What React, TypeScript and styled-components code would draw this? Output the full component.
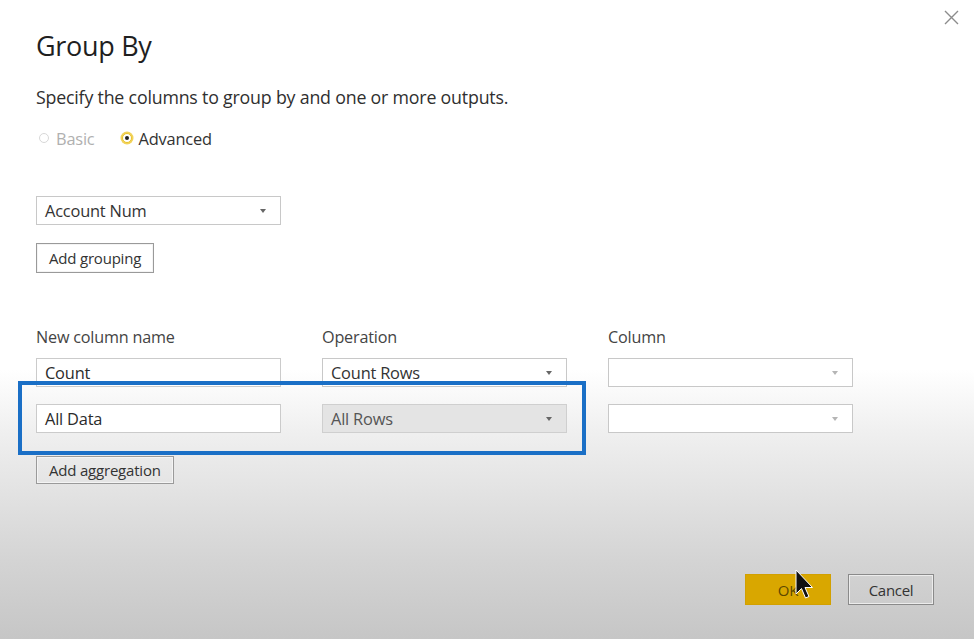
import React from "react";
import styled, { createGlobalStyle } from "styled-components";

const Global = createGlobalStyle`
  html, body { margin: 0; padding: 0; }
  body {
    width: 974px;
    height: 639px;
    overflow: hidden;
    font-family: "Open Sans", "Noto Sans", "Liberation Sans", sans-serif;
  }
`;

const Dialog = styled.div`
  position: relative;
  width: 974px;
  height: 639px;
  box-sizing: border-box;
  padding: 0 36px;
  background: linear-gradient(
    to bottom,
    #ffffff 0px,
    #ffffff 370px,
    #f0f0f0 430px,
    #e3e3e3 490px,
    #d4d4d4 560px,
    #c6c6c6 639px
  );
  display: flex;
  flex-direction: column;
  color: #2b2b2b;
`;

const Close = styled.button`
  position: absolute;
  top: 8px;
  right: 14px;
  width: 18px;
  height: 18px;
  padding: 0;
  border: none;
  background: transparent;
  display: flex;
  align-items: center;
  justify-content: center;
`;

const Title = styled.h1`
  margin: 28px 0 0;
  font-size: 27px;
  line-height: 36px;
  font-weight: 400;
  color: #1f1f1f;
  letter-spacing: -0.3px;
`;

const Subtitle = styled.p`
  margin: 21px 0 0;
  font-size: 17.8px;
  line-height: 24px;
  color: #2f2f2f;
  letter-spacing: -0.2px;
`;

const RadioRow = styled.div`
  display: flex;
  align-items: center;
  gap: 24px;
  margin-top: 18px;
  height: 22px;
`;

const RadioLabel = styled.label<{ $disabled?: boolean }>`
  display: flex;
  align-items: center;
  gap: 7px;
  font-size: 16.4px;
  color: ${(p) => (p.$disabled ? "#b0b0b0" : "#333")};
  letter-spacing: -0.2px;
`;

const RadioDot = styled.span<{ $checked?: boolean }>`
  position: relative;
  width: 10px;
  height: 10px;
  border-radius: 50%;
  box-sizing: border-box;
  border: 1px solid ${(p) => (p.$checked ? "#e9c22a" : "#d8d8d8")};
  box-shadow: ${(p) => (p.$checked ? "0 0 0 1.5px #f2d35a" : "none")};
  background: #fff;
  margin-left: 3px;
  &::after {
    content: "";
    display: ${(p) => (p.$checked ? "block" : "none")};
    position: absolute;
    left: 2px;
    top: 2px;
    width: 4px;
    height: 4px;
    border-radius: 50%;
    background: #222;
  }
`;

const Select = styled.div<{ $shaded?: boolean }>`
  width: 245px;
  height: 29px;
  box-sizing: border-box;
  border: 1px solid ${(p) => (p.$shaded ? "#cfcfcf" : "#c8c8c8")};
  background: ${(p) => (p.$shaded ? "#e4e4e4" : "#ffffff")};
  display: flex;
  align-items: center;
  justify-content: space-between;
  padding: 0 14px 0 8px;
  font-size: 16.4px;
  color: ${(p) => (p.$shaded ? "#555" : "#333")};
  letter-spacing: -0.2px;
`;

const Input = styled.div`
  width: 245px;
  height: 29px;
  box-sizing: border-box;
  border: 1px solid #cbcbcb;
  background: #fff;
  display: flex;
  align-items: center;
  padding: 0 8px;
  font-size: 16.4px;
  color: #2b2b2b;
  letter-spacing: -0.2px;
`;

const Caret = styled.span<{ $light?: boolean }>`
  width: 0;
  height: 0;
  border-left: 3.5px solid transparent;
  border-right: 3.5px solid transparent;
  border-top: 4px solid ${(p) => (p.$light ? "#b5b5b5" : "#666")};
`;

const GroupSelect = styled(Select)`
  margin-top: 47px;
`;

const Button = styled.button<{ $top: number; $h: number }>`
  align-self: flex-start;
  margin-top: ${(p) => p.$top}px;
  height: ${(p) => p.$h}px;
  padding: 0 12px;
  box-sizing: border-box;
  border: 1px solid #9a9a9a;
  background: transparent;
  font-family: inherit;
  font-size: 15px;
  color: #333;
  letter-spacing: -0.2px;
  box-shadow: inset 0 0 0 1px #f4f4f4;
`;

const Grid = styled.div`
  margin-top: 53px;
  display: grid;
  grid-template-columns: 245px 245px 245px;
  column-gap: 41px;
  row-gap: 17px;
`;

const ColLabel = styled.div`
  font-size: 16.2px;
  color: #444;
  height: 22px;
  line-height: 22px;
  margin-bottom: -7px;
  letter-spacing: -0.2px;
`;

const Footer = styled.div`
  margin-top: auto;
  margin-bottom: 34px;
  margin-right: 4px;
  display: flex;
  justify-content: flex-end;
  gap: 17px;
`;

const FooterButton = styled.button<{ $primary?: boolean }>`
  width: 86px;
  height: 31px;
  box-sizing: border-box;
  border: ${(p) => (p.$primary ? "1px solid #d2a000" : "1.5px solid #8a8a8a")};
  background: ${(p) => (p.$primary ? "#d9a700" : "transparent")};
  font-family: inherit;
  font-size: 15px;
  color: ${(p) => (p.$primary ? "#5e4800" : "#333")};
  letter-spacing: -0.3px;
  box-shadow: ${(p) => (p.$primary ? "none" : "inset 0 0 0 1px #ececec")};
`;

const Highlight = styled.div`
  position: absolute;
  left: 18px;
  top: 381px;
  width: 568px;
  height: 74px;
  box-sizing: border-box;
  border: 4px solid #1a6fc6;
  pointer-events: none;
`;

const Cursor = styled.svg`
  position: absolute;
  left: 794px;
  top: 569px;
`;

export default function App() {
  return (
    <>
      <Global />
      <Dialog>
        <Close aria-label="Close">
          <svg width="15" height="15" viewBox="0 0 15 15">
            <path d="M1 1 L14 14 M14 1 L1 14" stroke="#8c8c8c" strokeWidth="1.4" />
          </svg>
        </Close>
        <Title>Group By</Title>
        <Subtitle>Specify the columns to group by and one or more outputs.</Subtitle>
        <RadioRow>
          <RadioLabel $disabled>
            <RadioDot />
            Basic
          </RadioLabel>
          <RadioLabel>
            <RadioDot $checked />
            Advanced
          </RadioLabel>
        </RadioRow>
        <GroupSelect>
          Account Num
          <Caret />
        </GroupSelect>
        <Button $top={18} $h={30}>Add grouping</Button>
        <Grid>
          <ColLabel>New column name</ColLabel>
          <ColLabel>Operation</ColLabel>
          <ColLabel>Column</ColLabel>
          <Input>Count</Input>
          <Select>
            Count Rows
            <Caret />
          </Select>
          <Select>
            <span />
            <Caret $light />
          </Select>
          <Input>All Data</Input>
          <Select $shaded>
            All Rows
            <Caret />
          </Select>
          <Select>
            <span />
            <Caret $light />
          </Select>
        </Grid>
        <Button $top={23} $h={28}>Add aggregation</Button>
        <Footer>
          <FooterButton $primary>OK</FooterButton>
          <FooterButton>Cancel</FooterButton>
        </Footer>
        <Highlight />
        <Cursor width="20" height="32" viewBox="0 0 20 32">
          <path
            d="M2 1 L2 25 L7.5 19.5 L11.5 29 L15 27.5 L11 18.5 L18.5 18.5 Z"
            fill="#111"
            stroke="#fff"
            strokeWidth="1"
          />
        </Cursor>
      </Dialog>
    </>
  );
}
